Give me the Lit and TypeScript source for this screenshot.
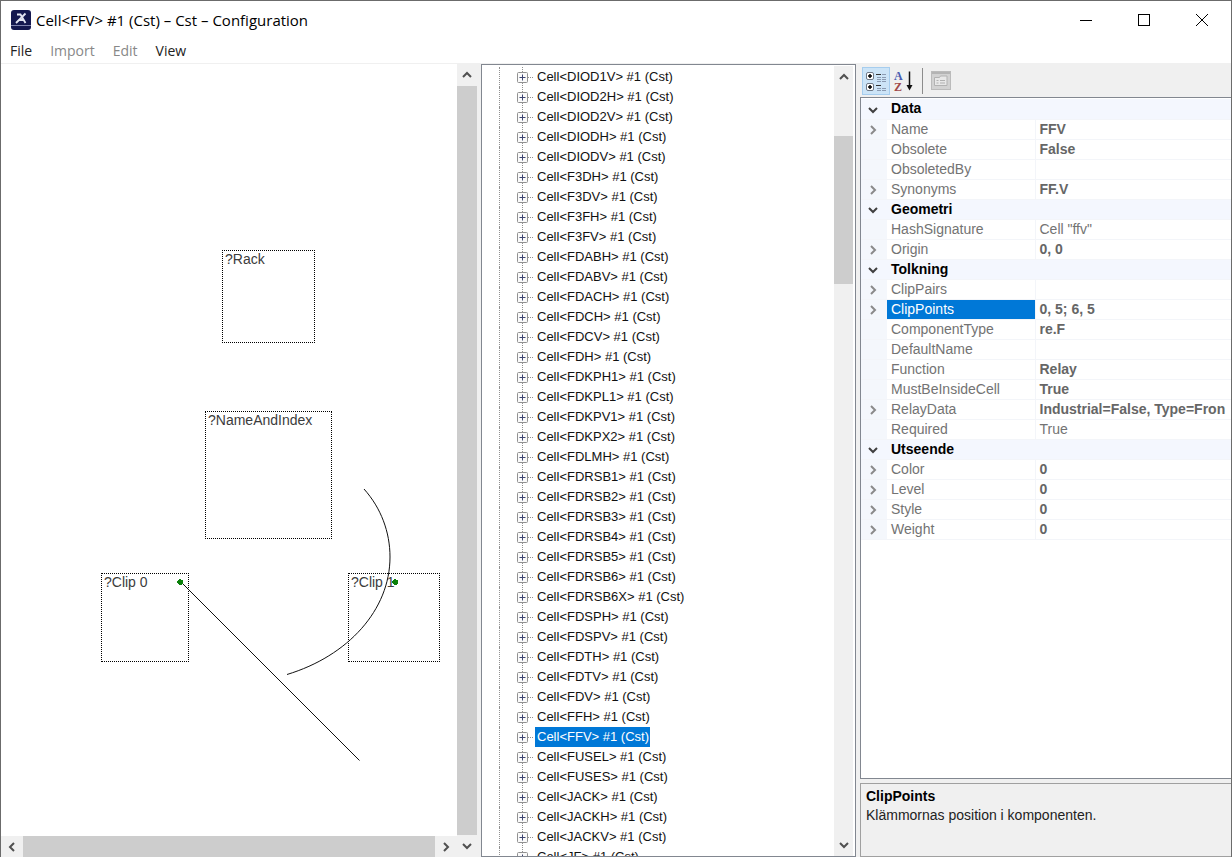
import { LitElement, html, svg, css, nothing } from "lit";
import { customElement, property, state } from "lit/decorators.js";
import { classMap } from "lit/directives/class-map.js";

type Direction = "up" | "down" | "left" | "right";

const CHEVRONS: Record<Direction, string> = {
  up: "M2 8 L6 4 L10 8",
  down: "M2 4 L6 8 L10 4",
  left: "M8 2 L4 6 L8 10",
  right: "M4 2 L8 6 L4 10",
};

const chevron = (direction: Direction) => html`
  <svg width="12" height="12" viewBox="0 0 12 12" aria-hidden="true">
    <path d=${CHEVRONS[direction]} fill="none" stroke="currentColor" stroke-width="2" />
  </svg>
`;

const CELLS = [
  "DIOD1V", "DIOD2H", "DIOD2V", "DIODH", "DIODV", "F3DH", "F3DV", "F3FH", "F3FV",
  "FDABH", "FDABV", "FDACH", "FDCH", "FDCV", "FDH", "FDKPH1", "FDKPL1", "FDKPV1",
  "FDKPX2", "FDLMH", "FDRSB1", "FDRSB2", "FDRSB3", "FDRSB4", "FDRSB5", "FDRSB6",
  "FDRSB6X", "FDSPH", "FDSPV", "FDTH", "FDTV", "FDV", "FFH", "FFV", "FUSEL",
  "FUSES", "JACK", "JACKH", "JACKV", "JF",
];

interface Prop {
  name: string;
  value?: string;
  expandable?: boolean;
  plain?: boolean;
}

const GROUPS: { title: string; props: Prop[] }[] = [
  {
    title: "Data",
    props: [
      { name: "Name", value: "FFV", expandable: true },
      { name: "Obsolete", value: "False" },
      { name: "ObsoletedBy" },
      { name: "Synonyms", value: "FF.V", expandable: true },
    ],
  },
  {
    title: "Geometri",
    props: [
      { name: "HashSignature", value: 'Cell "ffv"', plain: true },
      { name: "Origin", value: "0, 0", expandable: true },
    ],
  },
  {
    title: "Tolkning",
    props: [
      { name: "ClipPairs", expandable: true },
      { name: "ClipPoints", value: "0, 5; 6, 5", expandable: true },
      { name: "ComponentType", value: "re.F" },
      { name: "DefaultName" },
      { name: "Function", value: "Relay" },
      { name: "MustBeInsideCell", value: "True" },
      { name: "RelayData", value: "Industrial=False, Type=Fron", expandable: true },
      { name: "Required", value: "True", plain: true },
    ],
  },
  {
    title: "Utseende",
    props: [
      { name: "Color", value: "0", expandable: true },
      { name: "Level", value: "0", expandable: true },
      { name: "Style", value: "0", expandable: true },
      { name: "Weight", value: "0", expandable: true },
    ],
  },
];

const buttonReset = css`
  button {
    margin: 0;
    padding: 0;
    border: 0;
    background: none;
    color: inherit;
    font: inherit;
    cursor: default;
  }
  svg {
    display: block;
  }
`;

@customElement("scroll-bar")
export class ScrollBar extends LitElement {
  @property() orientation: "vertical" | "horizontal" = "vertical";
  @property({ type: Number }) start = 0;
  @property({ type: Number }) size = 100;

  static styles = [
    buttonReset,
    css`
      :host {
        display: block;
        background: #f0f0f0;
        color: #505050;
      }
      .bar {
        display: flex;
        flex-direction: column;
        height: 100%;
      }
      .bar.horizontal {
        flex-direction: row;
      }
      .arrow {
        display: grid;
        place-items: center;
        flex: 0 0 22px;
      }
      .track {
        flex: 1;
        display: flex;
        flex-direction: inherit;
      }
      .thumb {
        background: #cdcdcd;
      }
    `,
  ];

  render() {
    const vertical = this.orientation === "vertical";
    return html`
      <div class=${classMap({ bar: true, horizontal: !vertical })}>
        <button class="arrow" aria-label="Scroll back">${chevron(vertical ? "up" : "left")}</button>
        <div class="track">
          <div style="flex: ${this.start} 0 0"></div>
          <div class="thumb" style="flex: ${this.size} 0 0"></div>
          <div style="flex: ${100 - this.start - this.size} 0 0"></div>
        </div>
        <button class="arrow" aria-label="Scroll forward">${chevron(vertical ? "down" : "right")}</button>
      </div>
    `;
  }
}

@customElement("cell-canvas")
export class CellCanvas extends LitElement {
  static styles = css`
    :host {
      display: block;
      position: relative;
      overflow: hidden;
      background: #fff;
    }
    .node {
      position: absolute;
      box-sizing: border-box;
      border: 1px dotted #000;
      padding-left: 2px;
      font-size: 14px;
      line-height: 16px;
      color: #3c3c3c;
    }
    .rack { left: 221px; top: 186px; width: 93px; height: 93px; }
    .name { left: 204px; top: 347px; width: 127px; height: 128px; }
    .clip0 { left: 100px; top: 509px; width: 88px; height: 89px; }
    .clip1 { left: 347px; top: 509px; width: 92px; height: 89px; }
    .lines {
      position: absolute;
      inset: 0;
      width: 100%;
      height: 100%;
    }
  `;

  render() {
    const pin = (x: number, y: number) => svg`
      <path d="M${x - 1} ${y - 3} h2 v1 h2 v4 h-1 v1 h-3 v-1 h-1 v-1 h-1 v-2 h1 v-1 h1 z" fill="#0a800a" />
    `;
    return html`
      <div class="node rack">?Rack</div>
      <div class="node name">?NameAndIndex</div>
      <div class="node clip0">?Clip 0</div>
      <div class="node clip1">?Clip 1</div>
      <svg class="lines" aria-hidden="true">
        <path
          d="M181 519 L358.500 696.500 M363 425 C380 444 389 468 389 493 C389 546 347 592 286 610.500"
          fill="none"
          stroke="#111"
          stroke-width="1"
        />
        ${pin(179, 518)} ${pin(394, 518)}
      </svg>
    `;
  }
}

@customElement("cell-tree")
export class CellTree extends LitElement {
  @state() private selected = "FFV";

  static styles = [
    buttonReset,
    css`
      :host {
        display: flex;
        overflow: hidden;
        background: #fff;
        border: 1px solid #828790;
      }
      .tree {
        flex: 1;
        min-width: 0;
        margin: 0;
        padding: 2px 0 0 17px;
        list-style: none;
        overflow: hidden;
        font-size: 13px;
        line-height: 20px;
        color: #111;
      }
      .item {
        display: flex;
        align-items: center;
        height: 20px;
        padding-left: 17px;
        border-left: 1px dotted #909090;
      }
      .toggle {
        display: block;
        flex: none;
      }
      .label {
        padding: 0 1px 0 2px;
        white-space: nowrap;
      }
      .selected {
        background: #0078d7;
        color: #fff;
      }
      .bar {
        flex: 0 0 19px;
        margin: 1px 2px 0 0;
      }
    `,
  ];

  render() {
    return html`
      <ul class="tree" role="tree" aria-label="Cells">
        ${CELLS.map(
          (cell) => html`
            <li class="item" role="treeitem" aria-selected=${cell === this.selected}>
              <button class="toggle" aria-label="Expand ${cell}">
                <svg width="18" height="20" viewBox="0 0 18 20">
                  <path d="M5.500 0 V20 M11 10.500 H16" stroke="#909090" stroke-dasharray="1 1" />
                  <rect x="0.500" y="5.500" width="10" height="10" rx="1" fill="#fafafa" stroke="#919191" />
                  <path d="M2.500 10.500 H8.500 M5.500 7.500 V13.500" stroke="#3c4470" />
                </svg>
              </button>
              <button
                class=${classMap({ label: true, selected: cell === this.selected })}
                @click=${() => (this.selected = cell)}
              >Cell&lt;${cell}&gt; #1 (Cst)</button>
            </li>
          `
        )}
      </ul>
      <scroll-bar class="bar" start="6.500" size="19.800"></scroll-bar>
    `;
  }
}

@customElement("property-panel")
export class PropertyPanel extends LitElement {
  @state() private selected = "ClipPoints";

  static styles = [
    buttonReset,
    css`
      :host {
        display: flex;
        flex-direction: column;
        min-width: 0;
        font-size: 14px;
      }
      .toolbar {
        display: flex;
        align-items: center;
        height: 33px;
        padding-left: 2px;
      }
      .tool {
        display: grid;
        place-items: center;
        box-sizing: border-box;
        width: 28px;
        height: 28px;
      }
      .tool.active {
        background: #cce4f7;
        border: 1px solid #a6cdee;
      }
      .letter {
        font: bold 12px "Liberation Serif", serif;
      }
      .separator {
        width: 1px;
        height: 26px;
        margin: 0 4px;
        background: #8c8c8c;
      }
      .grid {
        flex: 1;
        min-height: 0;
        overflow: hidden;
        padding-top: 1px;
        background: #fff;
        border: 1px solid #828790;
        border-right: 0;
      }
      .table {
        width: 100%;
        table-layout: fixed;
        border-collapse: collapse;
        color: #737373;
      }
      .gutter-col { width: 26px; }
      .name-col { width: 40%; }
      .table th,
      .table td {
        box-sizing: border-box;
        height: 20px;
        padding: 0 0 0 4px;
        line-height: 19px;
        text-align: left;
        font-weight: normal;
        white-space: nowrap;
        overflow: hidden;
        border-bottom: 1px solid #f3f5f9;
      }
      .table td.gutter {
        padding: 0 0 0 6px;
        background: #f4f7fc;
        color: #8a8a8a;
      }
      .gutter button {
        display: block;
        padding-top: 2px;
      }
      .table .category,
      .table .category th,
      .table .category td.gutter {
        background: #f4f7fe;
        color: #000;
        font-weight: bold;
      }
      .table .category td.gutter {
        color: #404040;
      }
      .table .value {
        border-left: 1px solid #f3f5f9;
        font-weight: bold;
        color: #666;
      }
      .table .value.plain {
        font-weight: normal;
        color: #737373;
      }
      .table .chosen {
        background: #0078d7;
        color: #fff;
      }
      .help {
        box-sizing: border-box;
        height: 74px;
        margin-top: 4px;
        padding: 3px 5px;
        border: 1px solid #a0a0a0;
        border-right: 0;
        color: #222;
        line-height: 19px;
      }
      .help-title {
        margin: 0;
        font-size: 14px;
        color: #000;
      }
      .help-text {
        margin: 0;
      }
    `,
  ];

  private renderProp(prop: Prop) {
    return html`
      <tr @click=${() => (this.selected = prop.name)}>
        <td class="gutter">
          ${prop.expandable
            ? html`<button aria-label="Expand ${prop.name}">${chevron("right")}</button>`
            : nothing}
        </td>
        <th scope="row" class=${classMap({ chosen: prop.name === this.selected })}>${prop.name}</th>
        <td class=${classMap({ value: true, plain: !!prop.plain })}>${prop.value ?? nothing}</td>
      </tr>
    `;
  }

  render() {
    return html`
      <div class="toolbar" role="toolbar">
        <button class="tool active" aria-label="Categorized">
          <svg width="22" height="22" viewBox="0 0 22 22">
            <g fill="#fff" stroke="#6f7a88">
              <rect x="1.500" y="2.500" width="7" height="7" rx="1.500" />
              <rect x="1.500" y="13.500" width="7" height="7" rx="1.500" />
            </g>
            <path d="M3 6h4M5 4v4M3 17h4M5 15v4" stroke="#000" stroke-width="1.500" />
            <path d="M11 4.500h5M11 15.500h5" stroke="#333" />
            <path
              d="M12 7.500h4M17 7.500h4M12 9.500h4M17 9.500h4M12 11.500h4M17 11.500h4M17 4.500h4M12 18.500h4M17 18.500h4M12 20.500h4M17 20.500h4"
              stroke="#8b9bb2"
            />
          </svg>
        </button>
        <button class="tool" aria-label="Alphabetical">
          <svg width="22" height="22" viewBox="0 0 22 22" fill="none">
            <text class="letter" x="1" y="10" fill="#4a5cb0">A</text>
            <text class="letter" x="1" y="21" fill="#a04848">Z</text>
            <path d="M16.500 1.500 V18" stroke="#111" stroke-width="1.500" />
            <path d="M13.500 15 H19.500 L16.500 20.500 Z" fill="#111" />
          </svg>
        </button>
        <span class="separator"></span>
        <button class="tool" aria-label="Property pages" disabled>
          <svg width="20" height="19" viewBox="0 0 20 19">
            <rect x="0.500" y="0.500" width="19" height="18" fill="#d2d2d2" stroke="#bbb" />
            <path d="M1 2h18" stroke="#b4b4b4" stroke-width="2" />
            <path d="M3.500 6.500h5l1-1.500h6.500v9.500h-12.500z" fill="#e8e8e8" stroke="#b2b2b2" />
            <path d="M5.500 9.500h2M9 9.500h5M5.500 12h2M9 12h5" stroke="#b0b0b0" />
          </svg>
        </button>
      </div>
      <div class="grid">
        <table class="table">
          <colgroup>
            <col class="gutter-col" />
            <col class="name-col" />
            <col />
          </colgroup>
          ${GROUPS.map(
            (group) => html`
              <tbody>
                <tr class="category">
                  <td class="gutter">
                    <button aria-label="Collapse ${group.title}">${chevron("down")}</button>
                  </td>
                  <th colspan="2" scope="rowgroup">${group.title}</th>
                </tr>
                ${group.props.map((prop) => this.renderProp(prop))}
              </tbody>
            `
          )}
        </table>
      </div>
      <section class="help">
        <h2 class="help-title">${this.selected}</h2>
        <p class="help-text">Klämmornas position i komponenten.</p>
      </section>
    `;
  }
}

@customElement("app-root")
export class AppRoot extends LitElement {
  static styles = [
    buttonReset,
    css`
      :host {
        display: flex;
        flex-direction: column;
        box-sizing: border-box;
        height: 100vh;
        overflow: hidden;
        background: #fff;
        border: 1px solid #6b6b6b;
        border-bottom: 0;
        font-family: "Liberation Sans", Arial, sans-serif;
      }
      .titlebar {
        display: flex;
        align-items: center;
        height: 38px;
        padding-left: 10px;
        font: 15px/20px "Open Sans", "Noto Sans", sans-serif;
        color: #000;
      }
      .title {
        flex: 1;
        margin: 0 0 0 5px;
        font: inherit;
      }
      .window-button {
        display: grid;
        place-items: center;
        width: 58px;
        height: 38px;
      }
      .menu {
        display: flex;
        align-items: center;
        gap: 18px;
        height: 24px;
        padding-left: 9px;
        font: 14px/20px "Open Sans", "Noto Sans", sans-serif;
        color: #222;
        border-bottom: 1px solid #f0f0f0;
      }
      .menu button:disabled {
        color: #888;
      }
      .panes {
        flex: 1;
        min-height: 0;
        display: grid;
        grid-template-columns: minmax(0, 476fr) minmax(0, 375fr) minmax(0, 371fr);
        gap: 4px;
        background: #f0f0f0;
      }
      .view {
        display: grid;
        grid-template-columns: minmax(0, 1fr) 20px;
        grid-template-rows: minmax(0, 1fr) 21px;
      }
      .vertical {
        grid-column: 2;
        grid-row: 1 / 3;
      }
      .tree {
        min-height: 0;
      }
      .props {
        min-height: 0;
      }
    `,
  ];

  render() {
    return html`
      <header class="titlebar">
        <svg width="20" height="20" viewBox="0 0 20 20" aria-hidden="true">
          <rect width="20" height="20" rx="3" fill="#14184f" />
          <path d="M6 4.500 H9.500 L14.500 13 M14.500 3.500 L5 13 M8 10 H13" fill="none" stroke="#e4e6f2" stroke-width="1.800" />
          <path d="M0 15.500 H20" stroke="#7d82ad" />
        </svg>
        <h1 class="title">Cell&lt;FFV&gt; #1 (Cst) – Cst – Configuration</h1>
        <button class="window-button" aria-label="Minimize">
          <svg width="12" height="12" viewBox="0 0 12 12"><path d="M0 6.500 H12" stroke="#000" /></svg>
        </button>
        <button class="window-button" aria-label="Maximize">
          <svg width="12" height="12" viewBox="0 0 12 12">
            <rect x="0.500" y="0.500" width="11" height="11" fill="none" stroke="#000" />
          </svg>
        </button>
        <button class="window-button" aria-label="Close">
          <svg width="12" height="12" viewBox="0 0 12 12"><path d="M0 0 L12 12 M12 0 L0 12" stroke="#000" /></svg>
        </button>
      </header>
      <nav class="menu" aria-label="Main menu">
        <button>File</button>
        <button disabled>Import</button>
        <button disabled>Edit</button>
        <button>View</button>
      </nav>
      <main class="panes">
        <section class="view">
          <cell-canvas></cell-canvas>
          <scroll-bar class="vertical" start="0" size="100"></scroll-bar>
          <scroll-bar orientation="horizontal" start="0" size="100"></scroll-bar>
        </section>
        <cell-tree class="tree"></cell-tree>
        <property-panel class="props"></property-panel>
      </main>
    `;
  }
}
